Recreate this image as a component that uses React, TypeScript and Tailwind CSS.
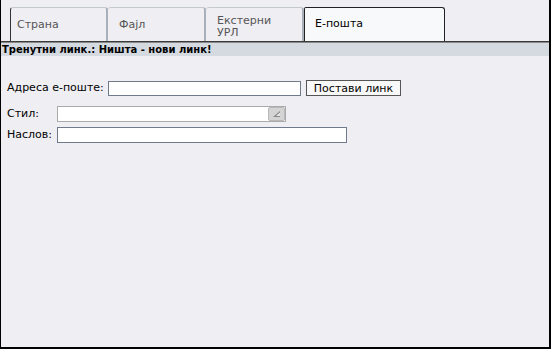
import React from "react";

const font = { fontFamily: '"DejaVu Sans", Verdana, sans-serif' };

function Tab({ children, active, first }: { children: React.ReactNode; active?: boolean; first?: boolean }) {
  if (active) {
    return (
      <div className="w-[141px] h-[34px] bg-[#f8f9fb] border border-b-0 border-[#222] rounded-tr-[3px] rounded-tl-[2px] flex items-center pl-[10px] text-[11px] text-black">
        {children}
      </div>
    );
  }
  return (
    <div
      className={
        "w-[98px] h-[34px] bg-[#efeef3] border-t border-t-[#c4c8cf] rounded-t-[3px] flex items-center text-[11px] leading-[13px] text-[#555] " +
        (first ? "border-l border-l-[#333] border-r-2 border-r-[#a9b0ba] pl-[6px]" : "border-r-2 border-r-[#a9b0ba] pl-[11px]")
      }
    >
      {children}
    </div>
  );
}

export default function App() {
  return (
    <div
      style={font}
      className="w-[551px] h-[349px] bg-[#efeef3] border-l border-r-2 border-b-2 border-black flex flex-col overflow-hidden"
    >
      <div className="flex pt-[7px] pl-[9px] h-[41px]">
        <Tab first>Страна</Tab>
        <Tab>Фајл</Tab>
        <div className="w-[98px] h-[34px] bg-[#efeef3] border-t border-t-[#c4c8cf] border-r-2 border-r-[#a9b0ba] rounded-t-[3px] flex flex-col justify-center pl-[11px] pt-[4px] text-[11px] leading-[12px] text-[#555]">
          <span>Екстерни</span>
          <span>УРЛ</span>
        </div>
        <Tab active>Е-пошта</Tab>
      </div>
      <div className="h-[1px] bg-[#3a3a3a]" />
      <div className="h-[1px] bg-[#8a8a8a]" />
      <div className="h-[13px] bg-[#d5dae1] flex items-center pl-[1px] text-[10px] font-bold text-black leading-none">
        Тренутни линк.: Ништа - нови линк!
      </div>
      <div className="flex flex-col pl-[6px] pt-[24px] text-[11px] text-black">
        <div className="flex items-center h-[16px]">
          <span className="w-[101px]">Адреса е-поште:</span>
          <div className="w-[193px] h-[15px] bg-white border border-[#6f7a8a]" />
          <button className="ml-[5px] w-[95px] h-[16px] bg-[#f8f8f8] border border-[#555] text-[11px] leading-none text-black flex items-center justify-center">
            Постави линк
          </button>
        </div>
        <div className="flex items-center h-[16px] mt-[10px]">
          <span className="w-[50px]">Стил:</span>
          <div className="w-[229px] h-[16px] bg-white border border-[#aaa] flex justify-end">
            <div className="w-[17px] h-[14px] bg-[#d4d4d4] border border-[#b8b8b8] rounded-[2px] flex items-center justify-center">
              <svg width="9" height="8" viewBox="0 0 9 8">
                <polygon points="8,1 8,7 1,7" fill="#888" />
                <polygon points="8,2.5 8,6 4,6" fill="#e8e8e8" />
              </svg>
            </div>
          </div>
        </div>
        <div className="flex items-center h-[16px] mt-[5px]">
          <span className="w-[50px]">Наслов:</span>
          <div className="w-[290px] h-[16px] bg-white border border-[#6f7a8a]" />
        </div>
      </div>
    </div>
  );
}
